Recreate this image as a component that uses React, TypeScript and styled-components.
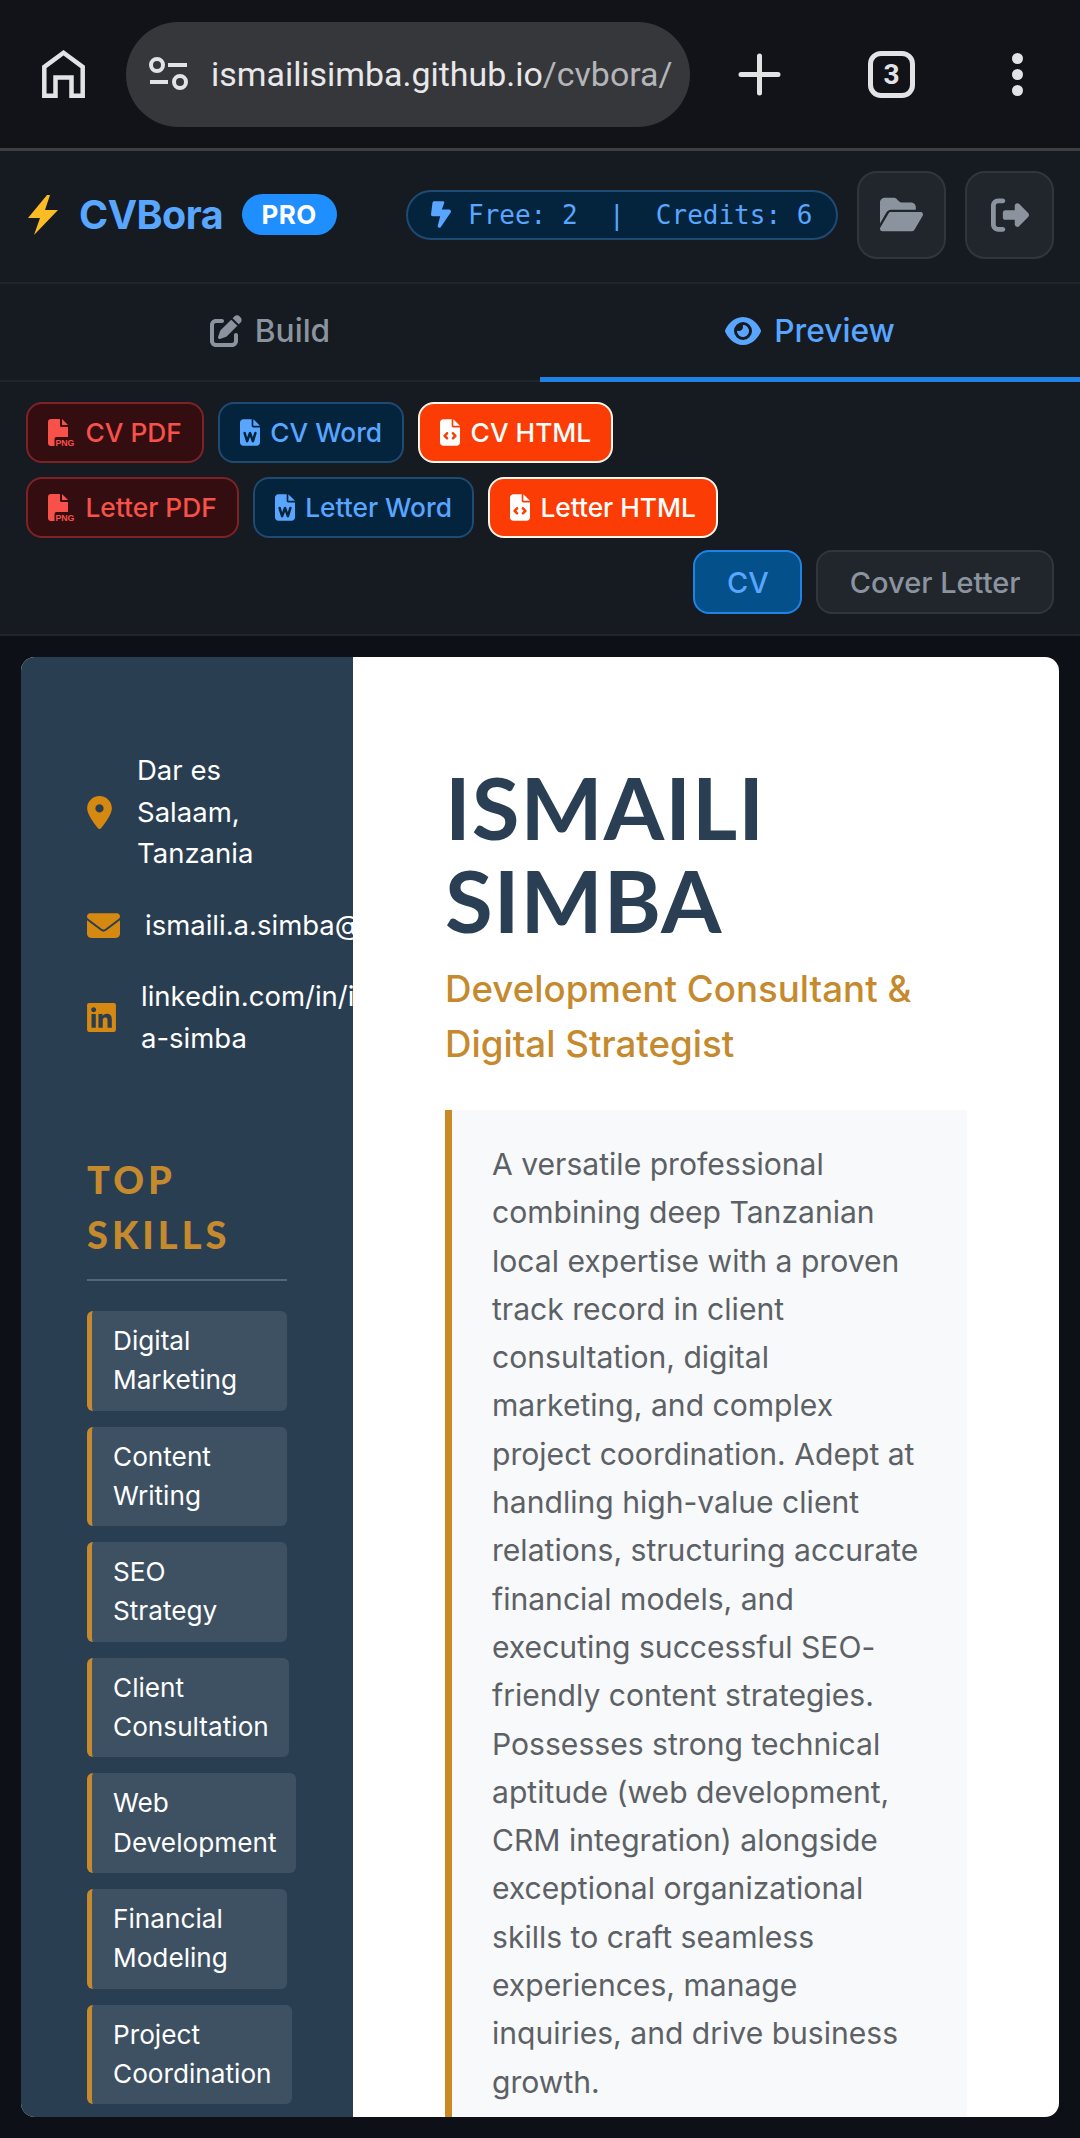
import { createGlobalStyle, styled } from "styled-components";
import {
  FaBoltLightning,
  FaEnvelope,
  FaEye,
  FaFileCode,
  FaFileWord,
  FaFolderOpen,
  FaLinkedin,
  FaLocationDot,
  FaPenToSquare,
  FaRightFromBracket,
} from "react-icons/fa6";

const GlobalStyle = createGlobalStyle`
  html, body {
    margin: 0;
    padding: 0;
    background: #0d1117;
  }
  * { box-sizing: border-box; }
  body { font-family: Inter, "Liberation Sans", sans-serif; }
`;

const Page = styled.div`
  width: 1080px;
  height: 2138px;
  overflow: hidden;
  display: flex;
  flex-direction: column;
  background: #0d1117;
`;

/* browser chrome */
const Chrome = styled.div`
  height: 151px;
  flex: none;
  display: flex;
  align-items: center;
  background: #111318;
  border-bottom: 3px solid #3c4043;
`;

const ChromeIcon = styled.div<{ $w: number }>`
  width: ${(p) => p.$w}px;
  flex: none;
  display: flex;
  justify-content: center;
  align-items: center;
  color: #e3e3e6;
`;

const UrlBar = styled.div`
  width: 564px;
  height: 105px;
  flex: none;
  display: flex;
  align-items: center;
  gap: 22px;
  padding-left: 23px;
  border-radius: 53px;
  background: #36373b;
  overflow: hidden;
`;

const SiteIcon = styled.svg`
  flex: none;
`;

const UrlText = styled.span`
  font-family: Roboto, sans-serif;
  font-size: 33.9px;
  white-space: nowrap;
  color: #e8e8ea;
  span { color: #b4b5b9; }
`;

const TabCount = styled.div`
  width: 47px;
  height: 47px;
  border: 5px solid #e3e3e6;
  border-radius: 13px;
  display: flex;
  justify-content: center;
  align-items: center;
  font-family: Roboto, sans-serif;
  font-size: 28px;
  font-weight: 700;
  color: #e3e3e6;
`;

/* app header */
const Header = styled.header`
  height: 133px;
  flex: none;
  display: flex;
  align-items: center;
  padding: 0 26px 4px 28px;
  background: #161b22;
  border-bottom: 2px solid #21262d;
`;

const Brand = styled.div`
  display: flex;
  align-items: center;
  font-size: 39.4px;
  font-weight: 700;
  color: #58a6ff;
  letter-spacing: -0.5px;
`;

const BoltMark = styled.svg`
  margin-right: 21px;
`;

const ProBadge = styled.span`
  margin-left: 18.5px;
  width: 95px;
  height: 41px;
  border-radius: 21px;
  background: #1f8fff;
  color: #fff;
  font-size: 26px;
  font-weight: 700;
  display: flex;
  align-items: center;
  justify-content: center;
  letter-spacing: 0.5px;
`;

const CreditPill = styled.div`
  margin-left: auto;
  width: 432px;
  height: 50px;
  display: flex;
  align-items: center;
  gap: 17px;
  padding-left: 23px;
  border-radius: 25px;
  border: 2px solid #1f4a72;
  background: #04233d;
  color: #58a6ff;
  font-family: "DejaVu Sans Mono", "Liberation Mono", monospace;
  font-size: 26px;
  white-space: pre;
  svg { width: 20px; height: 27px; flex: none; }
`;

const SquareButton = styled.button`
  width: 89px;
  height: 88px;
  margin-left: 19px;
  padding: 0;
  display: flex;
  align-items: center;
  justify-content: center;
  background: #21262d;
  border: 2px solid #30363d;
  border-radius: 20px;
  color: #8b949e;
  font-size: 38px;
`;

const FolderIcon = styled(FaFolderOpen)`
  font-size: 43px;
`;

/* tabs */
const Tabs = styled.nav`
  height: 98px;
  flex: none;
  display: flex;
  background: #161b22;
  border-bottom: 2px solid #21262d;
`;

const Tab = styled.div<{ $active?: boolean }>`
  flex: 1;
  display: flex;
  align-items: center;
  justify-content: center;
  gap: 13px;
  font-size: 31.7px;
  font-weight: 500;
  margin-bottom: -2px;
  color: ${(p) => (p.$active ? "#58a6ff" : "#8b949e")};
  border-bottom: 5px solid ${(p) => (p.$active ? "#1f83e6" : "transparent")};
  svg { flex: none; font-size: 32px; }
`;

const EyeIcon = styled(FaEye)`
  && { width: 36px; }
`;

/* export actions */
const Actions = styled.section`
  height: 254px;
  flex: none;
  padding: 20px 26px 0 26px;
  display: flex;
  flex-direction: column;
  background: #161b22;
  border-bottom: 2px solid #21262d;
`;

const ActionRow = styled.div`
  display: flex;
  gap: 14px;
  margin-bottom: 14px;
`;

const tones = {
  pdf: { bg: "#340d10", border: "#7d2327", color: "#f85149" },
  word: { bg: "#04233d", border: "#1f4a72", color: "#58a6ff" },
  html: { bg: "#fb3d05", border: "#fff6ee", color: "#ffffff" },
};

const ActionButton = styled.button<{ $tone: keyof typeof tones }>`
  height: 61px;
  padding: 0 20px;
  display: flex;
  align-items: center;
  gap: 10.5px;
  font-family: inherit;
  font-size: 26.3px;
  font-weight: 500;
  border-radius: 16px;
  border: 2px solid ${(p) => tones[p.$tone].border};
  background: ${(p) => tones[p.$tone].bg};
  color: ${(p) => tones[p.$tone].color};
  svg { width: 20px; height: 27px; flex: none; }
`;

const PngSvg = styled.svg`
  overflow: visible;
  && { width: 27px; }
`;

const ToggleRow = styled.div`
  display: flex;
  justify-content: flex-end;
  gap: 14px;
  margin-top: -2px;
`;

const Toggle = styled.button<{ $active?: boolean }>`
  height: 64px;
  padding: 0 31.5px;
  font-family: inherit;
  font-size: 29px;
  font-weight: 500;
  border-radius: 16px;
  border: 2px solid ${(p) => (p.$active ? "#1f83e6" : "#30363d")};
  background: ${(p) => (p.$active ? "#04508a" : "#21262d")};
  color: ${(p) => (p.$active ? "#58a6ff" : "#8b949e")};
`;

/* cv preview */
const PreviewArea = styled.main`
  flex: 1;
  min-height: 0;
  padding: 21px;
  background: #0d1117;
`;

const CvCard = styled.div`
  height: 100%;
  display: flex;
  border-radius: 14px;
  overflow: hidden;
  background: #fff;
`;

const Sidebar = styled.aside`
  width: 332px;
  flex: none;
  padding: 93px 0 0 66px;
  background: #2a3e52;
  overflow: hidden;
`;

const ContactRow = styled.div`
  display: flex;
  align-items: center;
  gap: 25px;
  width: 320px;
  margin-bottom: 30px;
  font-size: 27.5px;
  line-height: 41.5px;
  color: #fff;
  svg { flex: none; height: 33px; color: #d68910; }
`;

const PinIcon = styled(FaLocationDot)`
  width: 25px;
`;

const MailIcon = styled(FaEnvelope)`
  width: 33px;
`;

const LinkedinIcon = styled(FaLinkedin)`
  width: 29px;
`;

const Location = styled.span`
  width: 140px;
`;

const SideHeading = styled.h3`
  width: 200px;
  margin: 93px 0 30px;
  padding-bottom: 17px;
  border-bottom: 2px solid #4f6880;
  font-family: Lato, sans-serif;
  font-size: 38px;
  line-height: 55px;
  font-weight: 900;
  letter-spacing: 4px;
  color: #c58a2e;
`;

const SkillList = styled.div`
  display: flex;
  flex-direction: column;
  align-items: flex-start;
  gap: 16px;
`;

const Skill = styled.div`
  min-width: 200px;
  padding: 10px 20px 11px 21px;
  border-left: 5px solid #c58a2e;
  border-radius: 6px;
  background: #3e5163;
  font-size: 26.2px;
  line-height: 39.3px;
  color: #fff;
`;

const MainCol = styled.div`
  flex: 1;
  padding: 103px 92px 0 92px;
  overflow: hidden;
`;

const Name = styled.h1`
  margin: 0;
  font-family: Lato, sans-serif;
  font-size: 87px;
  line-height: 93px;
  font-weight: 700;
  letter-spacing: 1px;
  color: #2a3f54;
`;

const Role = styled.h2`
  margin: 15px 0 0;
  font-size: 36.7px;
  line-height: 55px;
  font-weight: 500;
  color: #c58a2e;
`;

const Summary = styled.p`
  margin: 39px 0 0;
  padding: 30px 44px 30px 40px;
  border-left: 7px solid #c98a24;
  background: #f8f9fa;
  font-size: 30.1px;
  line-height: 48.3px;
  color: #5c6166;
`;

const SKILLS = [
  "Digital Marketing",
  "Content Writing",
  "SEO Strategy",
  "Client Consultation",
  "Web Development",
  "Financial Modeling",
  "Project Coordination",
];

function PngFileIcon() {
  return (
    <PngSvg viewBox="0 0 27 27" fill="currentColor">
      <path d="M3 0h9v6.5A1.5 1.5 0 0 0 13.5 8H20v10H8.5a2 2 0 0 0-2 2v7H3a3 3 0 0 1-3-3V3a3 3 0 0 1 3-3Z" />
      <path d="M14 0l6 6h-6Z" />
      <text x="7.4" y="26.8" fontSize="9.6" fontWeight="700" fontFamily="Liberation Sans" textLength="19" lengthAdjust="spacingAndGlyphs">
        PNG
      </text>
    </PngSvg>
  );
}

export default function App() {
  return (
    <Page>
      <GlobalStyle />
      <Chrome>
        <ChromeIcon $w={126}>
          <svg width="43" height="48" viewBox="0 0 43 48" fill="none" stroke="#e3e3e6" strokeWidth="4.5">
            <path d="M2.3 45.7V17L21.5 2.8 40.7 17v28.7H29.5V27.5h-16v18.2Z" />
          </svg>
        </ChromeIcon>
        <UrlBar>
          <SiteIcon width="40" height="34" viewBox="0 0 40 34" fill="none" stroke="#e3e3e6" strokeWidth="4">
            <circle cx="8" cy="8" r="6" />
            <path d="M19 8h19M1 25h18" />
            <circle cx="31" cy="25" r="6" />
          </SiteIcon>
          <UrlText>
            ismailisimba.github.io<span>/cvbora/</span>
          </UrlText>
        </UrlBar>
        <ChromeIcon $w={138}>
          <svg width="43" height="43" viewBox="0 0 43 43" stroke="#e3e3e6" strokeWidth="5" strokeLinecap="round">
            <path d="M21.5 3v37M3 21.5h37" />
          </svg>
        </ChromeIcon>
        <ChromeIcon $w={127}>
          <TabCount>3</TabCount>
        </ChromeIcon>
        <ChromeIcon $w={125}>
          <svg width="11" height="43" viewBox="0 0 11 43" fill="#e3e3e6">
            <circle cx="5.5" cy="5.5" r="5.5" />
            <circle cx="5.5" cy="21.5" r="5.5" />
            <circle cx="5.5" cy="37.5" r="5.5" />
          </svg>
        </ChromeIcon>
      </Chrome>

      <Header>
        <Brand>
          <BoltMark width="30" height="40" viewBox="0 0 30 40">
            <path d="M19 0 0 23h12L6 40l24-25H17l5-15Z" fill="#fbbc24" />
          </BoltMark>
          CVBora
          <ProBadge>PRO</ProBadge>
        </Brand>
        <CreditPill>
          <FaBoltLightning />
          {"Free: 2  |  Credits: 6"}
        </CreditPill>
        <SquareButton>
          <FolderIcon />
        </SquareButton>
        <SquareButton>
          <FaRightFromBracket />
        </SquareButton>
      </Header>

      <Tabs>
        <Tab>
          <FaPenToSquare />
          Build
        </Tab>
        <Tab $active>
          <EyeIcon />
          Preview
        </Tab>
      </Tabs>

      <Actions>
        <ActionRow>
          <ActionButton $tone="pdf">
            <PngFileIcon />
            CV PDF
          </ActionButton>
          <ActionButton $tone="word">
            <FaFileWord />
            CV Word
          </ActionButton>
          <ActionButton $tone="html">
            <FaFileCode />
            CV HTML
          </ActionButton>
        </ActionRow>
        <ActionRow>
          <ActionButton $tone="pdf">
            <PngFileIcon />
            Letter PDF
          </ActionButton>
          <ActionButton $tone="word">
            <FaFileWord />
            Letter Word
          </ActionButton>
          <ActionButton $tone="html">
            <FaFileCode />
            Letter HTML
          </ActionButton>
        </ActionRow>
        <ToggleRow>
          <Toggle $active>CV</Toggle>
          <Toggle>Cover Letter</Toggle>
        </ToggleRow>
      </Actions>

      <PreviewArea>
        <CvCard>
          <Sidebar>
            <ContactRow>
              <PinIcon />
              <Location>Dar es Salaam, Tanzania</Location>
            </ContactRow>
            <ContactRow>
              <MailIcon />
              <span>ismaili.a.simba@gmail.com</span>
            </ContactRow>
            <ContactRow>
              <LinkedinIcon />
              <span>
                linkedin.com/in/ismaili-
                <br />
                a-simba
              </span>
            </ContactRow>
            <SideHeading>TOP SKILLS</SideHeading>
            <SkillList>
              {SKILLS.map((s) => (
                <Skill key={s}>
                  {s.split(" ")[0]}
                  <br />
                  {s.split(" ")[1]}
                </Skill>
              ))}
            </SkillList>
          </Sidebar>
          <MainCol>
            <Name>ISMAILI SIMBA</Name>
            <Role>Development Consultant &amp; Digital Strategist</Role>
            <Summary>
              A versatile professional combining deep Tanzanian local expertise with a proven track record in client
              consultation, digital marketing, and complex project coordination. Adept at handling high-value client
              relations, structuring accurate financial models, and executing successful SEO-friendly content
              strategies. Possesses strong technical aptitude (web development, CRM integration) alongside exceptional
              organizational skills to craft seamless experiences, manage inquiries, and drive business growth.
            </Summary>
          </MainCol>
        </CvCard>
      </PreviewArea>
    </Page>
  );
}
